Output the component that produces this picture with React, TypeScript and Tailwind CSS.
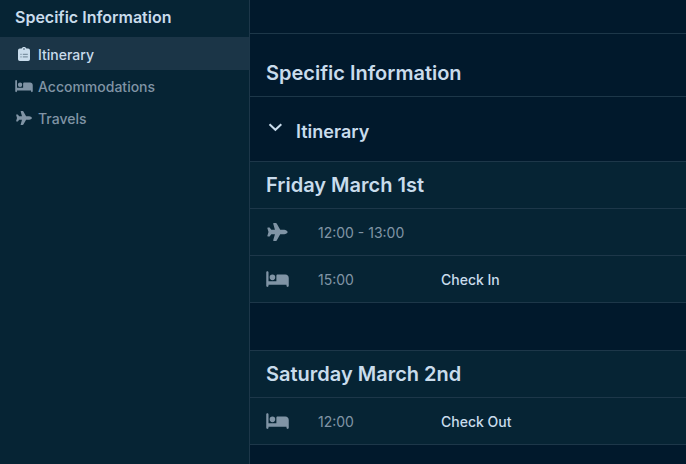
import { FaBed, FaPlane } from 'react-icons/fa6'
import type { IconType } from 'react-icons'
import { useState } from 'react'
import type { ComponentType, SVGProps } from 'react'

type Entry = { icon: IconType; time: string; label?: string }
type Day = { title: string; entries: Entry[] }
type NavItem = { label: string; icon: ComponentType<SVGProps<SVGSVGElement>> | IconType }

function ClipboardList({ className }: SVGProps<SVGSVGElement>) {
  return (
    <svg viewBox="0 0 18 14" className={className} aria-hidden="true">
      <path
        fill="currentColor"
        fillRule="evenodd"
        d="M4.8 1.6H6.6C6.9.6 7.8 0 9 0s2.1.6 2.4 1.6h1.8A1.8 1.8 0 0 1 15 3.4v8.8a1.8 1.8 0 0 1-1.8 1.8H4.8A1.8 1.8 0 0 1 3 12.2V3.4a1.8 1.8 0 0 1 1.8-1.8zM9 1.3a.7.7 0 1 0 0 1.4.7.7 0 0 0 0-1.4z"
      />
      <path stroke="#1b3547" strokeOpacity=".7" strokeWidth=".8" d="M5.4 7.3h1.2M7.8 7.3h5M5.4 9.9h1.2M7.8 9.9h5" />
    </svg>
  )
}

const navItems: NavItem[] = [
  { label: 'Itinerary', icon: ClipboardList },
  { label: 'Accommodations', icon: FaBed },
  { label: 'Travels', icon: FaPlane },
]

const days: Day[] = [
  {
    title: 'Friday March 1st',
    entries: [
      { icon: FaPlane, time: '12:00 - 13:00' },
      { icon: FaBed, time: '15:00', label: 'Check In' },
    ],
  },
  {
    title: 'Saturday March 2nd',
    entries: [{ icon: FaBed, time: '12:00', label: 'Check Out' }],
  },
]

function Chevron() {
  return (
    <svg viewBox="0 0 18 18" className="mb-[10px] size-[18px]" fill="none" stroke="currentColor" strokeWidth="2" aria-hidden="true">
      <path d="M3.5 6.2 L9.4 11.8 L15.3 6.2" />
    </svg>
  )
}

function DaySchedule({ day }: { day: Day }) {
  return (
    <section className="border-y border-[#1d3749] bg-[#062434]">
      <h3 className="flex h-[46px] items-center px-4 text-xl font-semibold">{day.title}</h3>
      <table className="w-full table-fixed border-separate border-spacing-0 text-sm">
        <tbody>
          {day.entries.map((entry) => (
            <tr key={entry.time} className="h-[47px] *:border-t *:border-[#1d3749]">
              <td className="w-[68px] pb-px pl-4 text-[#8094a5]">
                <entry.icon className="h-[18px] w-[23px]" aria-hidden="true" />
              </td>
              <td className="w-[123px] pt-px text-[#8094a5]">{entry.time}</td>
              <td className="pt-px font-medium">{entry.label}</td>
            </tr>
          ))}
        </tbody>
      </table>
    </section>
  )
}

export default function App() {
  const [active, setActive] = useState('Itinerary')
  const [open, setOpen] = useState(true)

  return (
    <div className="flex min-h-screen bg-[#01192c] font-['Inter',sans-serif] text-[#c9dcec]">
      {/* Sidebar */}
      <aside className="w-[250px] shrink-0 border-r border-[#1d3749] bg-[#062434]">
        <h2 className="px-[15px] pt-[5px] pb-2 text-base font-semibold">Specific Information</h2>
        <nav>
          {navItems.map(({ label, icon: Icon }) => (
            <a
              key={label}
              href="#"
              onClick={() => setActive(label)}
              className={`flex h-8 items-center gap-[5px] px-[15px] pt-px text-sm font-medium first:h-[33px] first:pt-[2px] ${
                active === label ? 'bg-[#1b3547]' : 'text-[#8094a5]'
              }`}
            >
              <Icon className="mb-[2px] h-[14px] w-[18px]" aria-hidden="true" />
              {label}
            </a>
          ))}
        </nav>
      </aside>

      {/* Content */}
      <main className="min-w-0 flex-1">
        <div className="h-[34px] border-b border-[#1d3749]" />
        <h1 className="border-b border-[#1d3749] px-4 pt-[25px] pb-[9px] text-xl font-semibold">
          Specific Information
        </h1>
        <h2>
          <button
            onClick={() => setOpen(!open)}
            aria-expanded={open}
            className="flex h-16 w-full items-center gap-3 px-4 pt-[6px] text-lg font-semibold"
          >
            <Chevron />
            Itinerary
          </button>
        </h2>
        {open && (
          <div className="space-y-[47px]">
            {days.map((day) => (
              <DaySchedule key={day.title} day={day} />
            ))}
          </div>
        )}
      </main>
    </div>
  )
}
